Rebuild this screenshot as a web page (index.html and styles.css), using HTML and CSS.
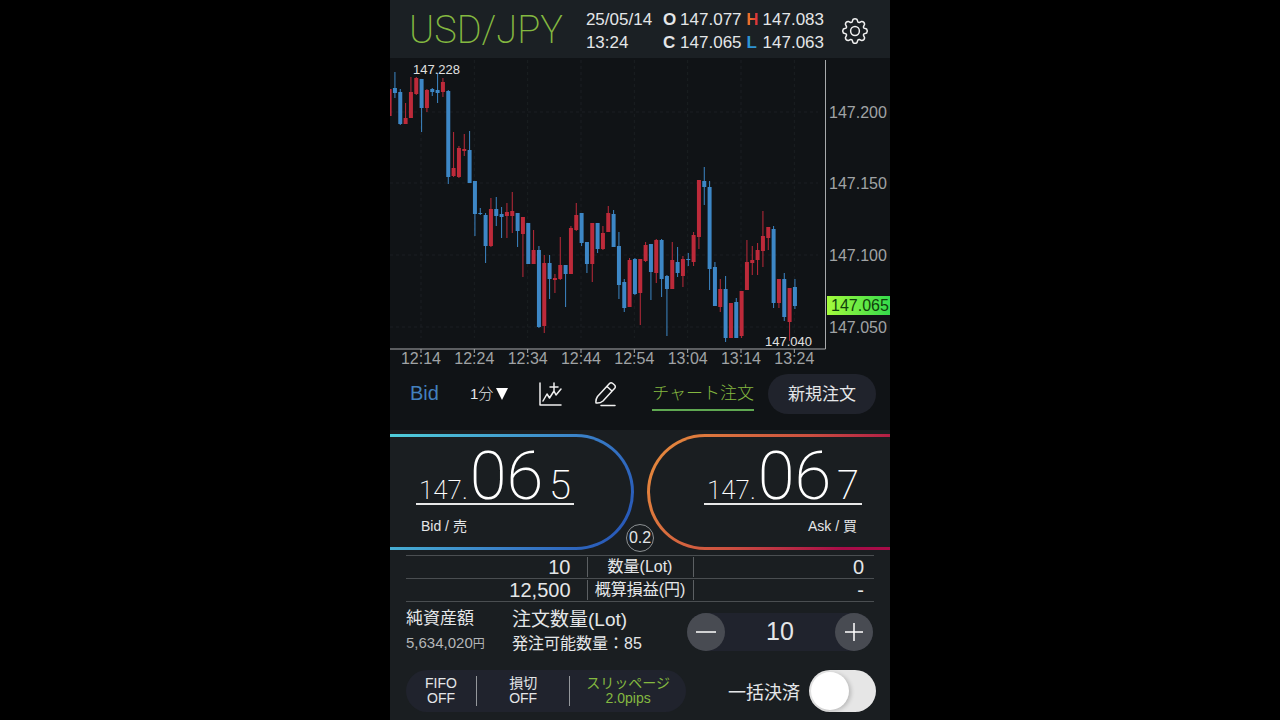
FILE: index.html
```html
<!DOCTYPE html>
<html lang="ja">
<head>
    <meta charset="UTF-8">
    <meta name="viewport" content="width=device-width, initial-scale=1.0">
    <title>USD/JPY</title>
    <link rel="stylesheet" href="styles.css">
</head>
<body>
    <main class="app">
        <header class="header">
            <h1 class="pair">USD/JPY</h1>
            <div class="datetime">25/05/14<br>13:24</div>
            <div class="ohlc">
                <b>O</b><span>147.077</span><b class="high">H</b><span>147.083</span>
                <b>C</b><span>147.065</span><b class="low">L</b><span>147.063</span>
            </div>
            <button class="icon-btn" aria-label="設定">
                <svg width="28" height="28" viewBox="-14 -14 28 28">
                    <path d="M-2.9 -9L-2 -11.6Q0 -13 2 -11.6L2.9 -9Q3.5 -8.3 4.4 -8.5L6.8 -9.6Q9.4 -9.4 9.6 -6.8L8.5 -4.4Q8.3 -3.5 9 -2.9L11.6 -2Q13 0 11.6 2L9 2.9Q8.3 3.5 8.5 4.4L9.6 6.8Q9.4 9.4 6.8 9.6L4.4 8.5Q3.5 8.3 2.9 9L2 11.6Q0 13 -2 11.6L-2.9 9Q-3.5 8.3 -4.4 8.5L-6.8 9.6Q-9.4 9.4 -9.6 6.8L-8.5 4.4Q-8.3 3.5 -9 2.9L-11.6 2Q-13 0 -11.6 -2L-9 -2.9Q-8.3 -3.5 -8.5 -4.4L-9.6 -6.8Q-9.4 -9.4 -6.8 -9.6L-4.4 -8.5Q-3.5 -8.3 -2.9 -9Z"/>
                    <circle r="4.4"/>
                </svg>
            </button>
        </header>

        <!-- ローソク足チャート -->
        <svg class="chart" id="chart" viewBox="0 58 500 312" role="img" aria-label="USD/JPY 1分足">
            <defs>
                <linearGradient id="now" x1="0" x2="1">
                    <stop offset="0" stop-color="#a4fb3c"/>
                    <stop offset="1" stop-color="#35dc4c"/>
                </linearGradient>
            </defs>
            <g id="grid" class="grid"></g>
            <path class="axis" d="M0 349H435.500V60"/>
            <g id="labels" class="labels"></g>
            <g id="candles"></g>
            <text class="peak" x="23" y="74">147.228</text>
            <text class="peak" x="375" y="346">147.040</text>
            <rect x="437" y="296" width="63" height="19" fill="url(#now)"/>
            <text class="now" x="441" y="311">147.065</text>
        </svg>

        <div class="toolbar">
            <button class="bid-toggle">Bid</button>
            <label class="period">
                <select aria-label="足種">
                    <option>1分</option>
                    <option>5分</option>
                </select>
                <svg width="12" height="12" viewBox="0 0 12 12"><path d="M0 0H12L6 12Z"/></svg>
            </label>
            <button class="icon-btn" aria-label="テクニカル">
                <svg width="24" height="26" viewBox="0 0 24 26">
                    <path d="M1 2V24H22M4 20L8 13L10.500 17L15 10L17 14L22 8M15 2V10M11 6H19"/>
                </svg>
            </button>
            <button class="icon-btn" aria-label="描画">
                <svg width="24" height="26" viewBox="0 0 24 26">
                    <path d="M2 22Q1.500 18.500 3.500 15.500L15.500 2.500Q17 1 18.800 2.500L20.500 4Q22 5.500 20.700 7.200L9 20Q6 22.500 2 22ZM13 5.500L18 10M7 24.500H21"/>
                </svg>
            </button>
            <div class="orders">
                <button class="chart-order">チャート注文</button>
                <button class="new-order">新規注文</button>
            </div>
        </div>

        <div class="quotes">
            <button class="quote bid">
                <span class="price"><span class="whole">147.</span><span class="big">06</span><span class="pip">5</span></span>
                <span class="side">Bid / 売</span>
            </button>
            <button class="quote ask">
                <span class="price"><span class="whole">147.</span><span class="big">06</span><span class="pip">7</span></span>
                <span class="side">Ask / 買</span>
            </button>
            <span class="spread">0.2</span>
        </div>

        <table class="positions">
            <tr>
                <td>10</td>
                <th scope="row"><span>数量(Lot)</span></th>
                <td>0</td>
            </tr>
            <tr>
                <td>12,500</td>
                <th scope="row"><span>概算損益(円)</span></th>
                <td>-</td>
            </tr>
        </table>

        <div class="lots">
            <div class="equity">
                <div>純資産額</div>
                <div class="amount">5,634,020<small>円</small></div>
            </div>
            <div class="lot-info">
                <label for="lot">注文数量(Lot)</label>
                <div class="available">発注可能数量：85</div>
            </div>
            <div class="stepper">
                <button aria-label="減らす"><svg width="20" height="20" viewBox="0 0 20 20"><path d="M0 10H20"/></svg></button>
                <input type="text" id="lot" value="10" inputmode="numeric">
                <button aria-label="増やす"><svg width="20" height="20" viewBox="0 0 20 20"><path d="M1 10H19M10 1V19"/></svg></button>
            </div>
        </div>

        <div class="settings">
            <div class="options">
                <button>FIFO<br>OFF</button>
                <button>損切<br>OFF</button>
                <button class="slippage">スリッページ<br>2.0pips</button>
            </div>
            <label for="close-all">一括決済</label>
            <input type="checkbox" class="switch" id="close-all">
        </div>
    </main>

    <script>
        // [色, 高値, 実体上, 実体下, 安値]
        const candles = [
            ['r', 89, 89, 116, 116], ['b', 72, 88, 93, 98], ['b', 89, 92, 124, 125], ['r', 103, 118, 124, 124],
            ['r', 77, 92, 118, 118], ['r', 77, 78, 94, 95], ['b', 79, 79, 108, 132], ['r', 89, 90, 108, 112],
            ['b', 88, 89, 92, 96], ['b', 73, 90, 93, 103], ['r', 78, 82, 92, 97], ['b', 90, 91, 177, 184],
            ['r', 132, 168, 176, 177], ['r', 146, 148, 177, 178], ['r', 134, 149, 151, 156], ['b', 131, 150, 183, 183],
            ['b', 181, 181, 214, 236], ['b', 208, 213, 214, 215], ['b', 213, 215, 246, 263], ['r', 198, 209, 246, 247],
            ['b', 197, 209, 216, 226], ['b', 207, 214, 217, 238], ['r', 203, 212, 216, 238], ['r', 192, 211, 216, 233],
            ['b', 213, 213, 231, 247], ['r', 217, 217, 234, 277], ['b', 223, 223, 264, 264], ['r', 230, 250, 264, 264],
            ['b', 246, 250, 327, 328], ['r', 255, 263, 326, 333], ['b', 255, 263, 279, 299], ['r', 274, 278, 280, 293],
            ['r', 237, 265, 279, 280], ['b', 265, 265, 274, 307], ['r', 226, 228, 274, 274], ['r', 203, 215, 230, 231],
            ['b', 213, 213, 243, 246], ['b', 242, 242, 264, 273], ['r', 223, 223, 264, 282], ['b', 223, 223, 249, 253],
            ['r', 226, 233, 249, 250], ['r', 206, 213, 232, 232], ['b', 210, 214, 247, 247], ['b', 232, 246, 285, 299],
            ['b', 279, 282, 308, 312], ['r', 258, 260, 307, 307], ['b', 258, 259, 294, 295], ['r', 259, 259, 293, 325],
            ['r', 242, 245, 261, 262], ['b', 244, 244, 272, 300], ['r', 239, 240, 273, 283], ['b', 239, 240, 279, 297],
            ['b', 275, 276, 289, 336], ['r', 242, 260, 289, 289], ['b', 247, 262, 273, 277], ['r', 256, 259, 276, 287],
            ['b', 253, 259, 260, 266], ['r', 232, 235, 262, 266], ['r', 180, 180, 237, 249], ['b', 167, 181, 187, 205],
            ['b', 181, 187, 269, 290], ['b', 262, 267, 306, 306], ['r', 279, 289, 307, 312], ['b', 276, 289, 338, 342],
            ['r', 303, 303, 338, 338], ['b', 298, 302, 338, 338], ['r', 291, 291, 336, 338], ['r', 240, 262, 290, 290],
            ['r', 246, 260, 263, 275], ['r', 243, 250, 260, 275], ['r', 211, 236, 251, 267], ['r', 227, 227, 238, 250],
            ['b', 226, 229, 303, 308], ['r', 279, 279, 303, 308], ['b', 273, 279, 317, 321], ['r', 288, 288, 322, 341],
            ['b', 279, 287, 306, 309]
        ];
        const times = ['12:14', '12:24', '12:34', '12:44', '12:54', '13:04', '13:14', '13:24'];
        const prices = [['147.200', 112], ['147.150', 183], ['147.100', 255], ['147.050', 327]];

        document.getElementById('candles').innerHTML = candles.map(([color, high, top, bottom, low], i) => {
            const x = i * 16 / 3 - 0.4;
            return `<path class="${color}" d="M${x} ${high}V${low}"/>
                <rect class="${color}" x="${x - 2}" y="${top}" width="4" height="${bottom - top}"/>`;
        }).join('');

        let grid = '';
        let labels = '';
        times.forEach((time, i) => {
            const x = 31 + i * 160 / 3;
            grid += `<path d="M${x} 60V338"/>`;
            labels += `<path d="M${x} 349V353"/><text x="${x}" y="364" text-anchor="middle">${time}</text>`;
        });
        prices.forEach(([price, y]) => {
            grid += `<path d="M0 ${y}H428"/>`;
            labels += `<text x="439" y="${y + 6}">${price}</text>`;
        });
        document.getElementById('grid').innerHTML = grid;
        document.getElementById('labels').innerHTML = labels;
    </script>
</body>
</html>
```

FILE: styles.css
```css
* {
    box-sizing: border-box;
}
body {
    margin: 0;
    background-color: #000;
    color: #e4e6e8;
    font-family: "Liberation Sans", "Noto Sans CJK JP", sans-serif;
}
button, input, select {
    margin: 0;
    padding: 0;
    border: none;
    background: none;
    color: inherit;
    font: inherit;
}
button {
    cursor: pointer;
}
svg {
    display: block;
}
.app {
    max-width: 500px;
    min-height: 100vh;
    margin: 0 auto;
    background-color: #1a1e21;
}
.header {
    display: flex;
    align-items: center;
    height: 58px;
    padding: 3px 21px 0 19px;
    background-color: #1b2024;
    font-size: 17px;
    line-height: 23px;
}
.pair {
    flex: 1;
    margin: 0;
    color: #84b840;
    font-family: Roboto, sans-serif;
    font-size: 38px;
    font-weight: 200;
}
.datetime {
    margin-right: 12px;
}
.ohlc {
    display: grid;
    grid-template-columns: 16px auto 15px auto;
    margin-right: 17px;
}
.ohlc b {
    margin-left: -1px;
}
.ohlc span:nth-of-type(odd) {
    margin-right: 6px;
}
.high {
    color: transparent;
    background: linear-gradient(90deg, #e8702c 20%, #d81840 80%);
    background-clip: text;
    -webkit-background-clip: text;
}
.low {
    color: #2e94d4;
}
.icon-btn svg {
    fill: none;
    stroke: #f0f0f0;
    stroke-width: 1.500;
    stroke-linejoin: round;
    stroke-linecap: round;
}

/* チャート */
.chart {
    width: 100%;
    background-color: #101316;
}
.grid path {
    stroke: #1b1f22;
    stroke-dasharray: 3 3;
}
.axis, .labels path {
    fill: none;
    stroke: #a8aaac;
}
.labels text {
    fill: #a0a3a5;
    font-size: 16px;
}
.peak {
    fill: #e0e0e0;
    font-size: 13px;
}
.now {
    fill: #10400c;
    font-size: 16px;
}
.r {
    fill: #bd2a3a;
    stroke: #bd2a3a;
}
.b {
    fill: #3d87c6;
    stroke: #3d87c6;
}
rect.r, rect.b {
    stroke: none;
}

.toolbar {
    display: flex;
    align-items: center;
    gap: 31px;
    height: 60px;
    padding: 0 14px 13px 20px;
    background-color: #101316;
}
.bid-toggle {
    color: #4380bd;
    font-size: 20px;
}
.period {
    display: flex;
    align-items: center;
    gap: 2px;
    font-size: 15px;
    font-weight: 300;
}
.period select {
    appearance: none;
}
.period svg {
    fill: #fff;
}
.orders {
    flex: 1;
    display: flex;
    justify-content: flex-end;
    align-items: center;
    gap: 14px;
    font-size: 17px;
    font-weight: 300;
    white-space: nowrap;
}
.chart-order {
    padding-top: 3px;
    border-bottom: 2px solid #5fa851;
    color: #84b840;
    line-height: 30px;
}
.new-order {
    width: 108px;
    height: 40px;
    padding-bottom: 2px;
    border-radius: 20px;
    background-color: #20232c;
    font-weight: 400;
}

/* レート */
.quotes {
    position: relative;
    display: grid;
    grid-template-columns: 1fr 1fr;
    gap: 13px;
    padding: 4px 0 5px;
}
.quote {
    display: flex;
    flex-direction: column;
    height: 116px;
    padding-top: 11px;
    border: 3px solid transparent;
}
.bid {
    align-items: flex-start;
    padding-left: 26px;
    border-left: none;
    border-radius: 0 58px 58px 0;
    background: linear-gradient(#1a1e21, #1a1e21) padding-box, linear-gradient(125deg, #50d0dc, #3a80c8 60%, #2450b4) border-box;
}
.ask {
    align-items: flex-end;
    padding-right: 28px;
    border-right: none;
    border-radius: 58px 0 0 58px;
    background: linear-gradient(#1a1e21, #1a1e21) padding-box, linear-gradient(125deg, #e8903c, #cc5040 50%, #a80c48 85%) border-box;
}
.price {
    display: flex;
    align-items: baseline;
    width: 158px;
    height: 57px;
    padding: 0 3px;
    border-bottom: 2px solid #e8e8e8;
    color: #fff;
    font-family: Roboto, sans-serif;
    font-weight: 200;
    line-height: 57px;
}
.whole {
    margin-right: 2px;
    font-size: 26px;
}
.big {
    font-size: 67px;
}
.pip {
    margin-left: auto;
    font-size: 40px;
}
.side {
    margin: 11px 5px 0;
    font-size: 14px;
    line-height: 20px;
}
.spread {
    position: absolute;
    left: 50%;
    bottom: 3px;
    width: 28px;
    height: 28px;
    margin-left: -14px;
    border: 1px solid #8c9093;
    border-radius: 50%;
    background-color: #1a1e21;
    font-size: 16px;
    line-height: 26px;
    text-align: center;
}

.positions {
    width: calc(100% - 32px);
    margin: 0 16px;
    border-collapse: collapse;
    table-layout: fixed;
    line-height: 20px;
}
.positions tr {
    border-top: 1px solid #4a4e51;
    border-bottom: 1px solid #4a4e51;
}
.positions td {
    height: 23px;
    padding: 0 16px 0 0;
    font-size: 20px;
    text-align: right;
}
.positions td:last-child {
    padding-right: 10px;
}
.positions th {
    width: 107px;
    padding: 0;
    font-size: 16px;
    font-weight: normal;
    white-space: nowrap;
}
.positions th span {
    display: block;
    border: solid #5c6063;
    border-width: 0 1px;
}

/* 注文数量 */
.lots {
    display: flex;
    align-items: center;
    padding: 5px 17px 0 16px;
    line-height: 24px;
}
.equity {
    width: 106px;
    font-size: 17px;
}
.amount {
    color: #b4b6b8;
    font-size: 15px;
}
.amount small {
    font-size: 12px;
}
.lot-info {
    flex: 1;
    font-size: 19px;
}
.lot-info label {
    display: block;
}
.available {
    font-size: 16px;
}
.stepper {
    display: flex;
    width: 186px;
    border-radius: 19px;
    background-color: #20232d;
}
.stepper button {
    flex: none;
    display: grid;
    place-items: center;
    width: 38px;
    height: 38px;
    border-radius: 50%;
    background-color: #484b52;
}
.stepper svg {
    stroke: #fff;
    stroke-width: 1.500;
}
.stepper input {
    flex: 1;
    min-width: 0;
    font-size: 25px;
    text-align: center;
}

.settings {
    display: flex;
    align-items: center;
    padding: 14px 14px 8px 16px;
    font-size: 18px;
}
.settings label {
    margin-left: auto;
    margin-right: 9px;
}
.options {
    display: grid;
    grid-template-columns: 3fr 4fr 5fr;
    align-items: center;
    width: 280px;
    height: 42px;
    border-radius: 21px;
    background-color: #20232d;
    font-size: 14px;
    line-height: 15px;
}
.options button + button {
    border-left: 1px solid #94979b;
}
.options button {
    height: 30px;
    white-space: nowrap;
}
.options .slippage {
    color: #84b840;
}
.switch {
    appearance: none;
    width: 67px;
    height: 42px;
    padding: 2px;
    border-radius: 21px;
    background-color: #e6e6e6;
    cursor: pointer;
}
.switch::before {
    content: "";
    display: block;
    width: 38px;
    height: 38px;
    border-radius: 50%;
    background-color: #fff;
    box-shadow: 2px 1px 4px rgba(0, 0, 0, 0.2);
}
.switch:checked {
    background-color: #84b840;
}
.switch:checked::before {
    margin-left: auto;
}
```
